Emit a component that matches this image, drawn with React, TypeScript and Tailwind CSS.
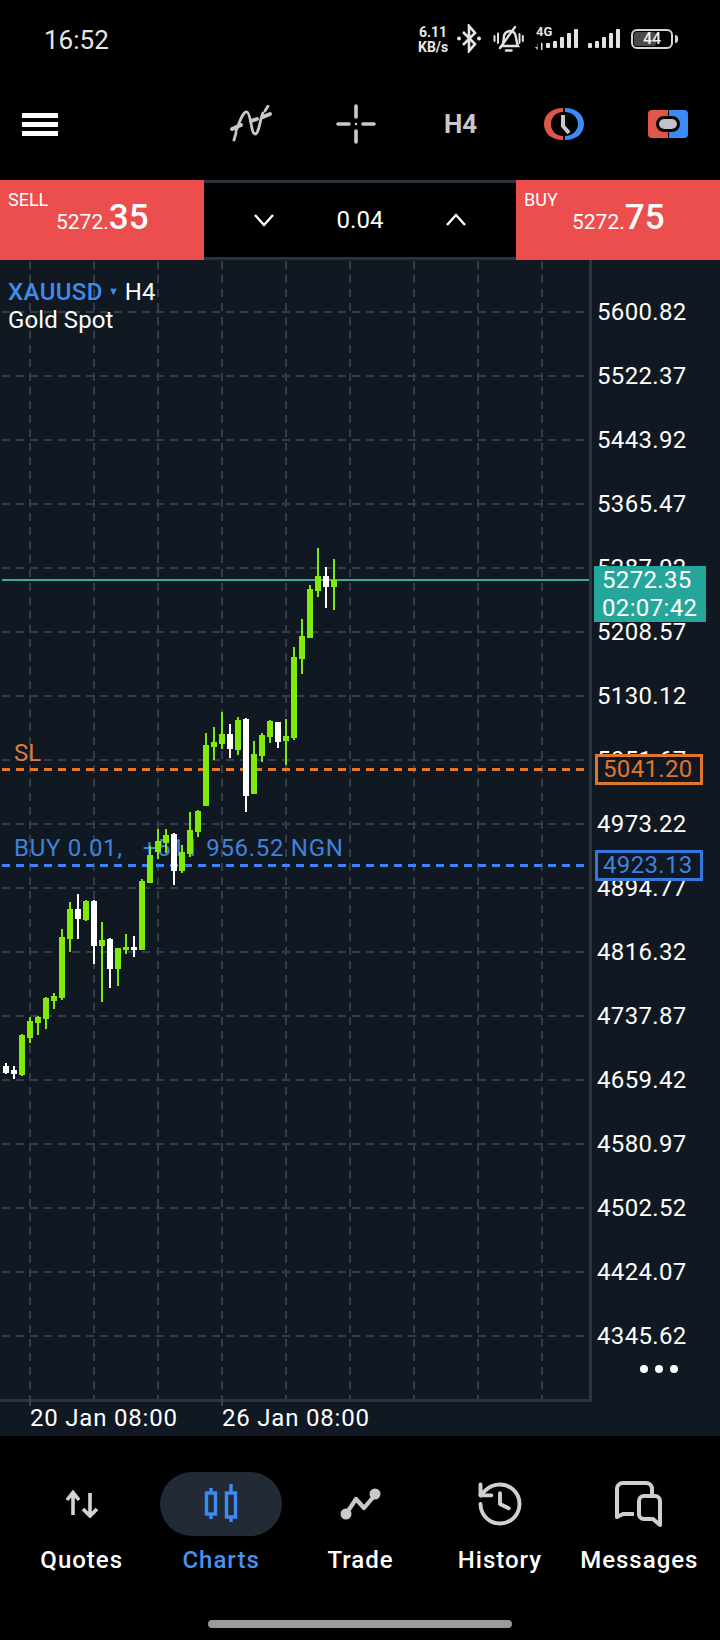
import { History } from "lucide-react";

// [x, wickTop, wickBottom, bodyTop, bodyBottom, white]
const candles: [number, number, number, number, number, boolean][] = [
  [6, 1063, 1074, 1066, 1073, true],
  [14, 1066, 1079, 1070, 1074, true],
  [22, 1034, 1076, 1035, 1075, false],
  [30, 1017, 1043, 1021, 1038, false],
  [38, 1016, 1035, 1017, 1023, false],
  [46, 997, 1029, 998, 1019, false],
  [54, 993, 1009, 996, 1001, false],
  [62, 929, 1000, 937, 998, false],
  [70, 902, 952, 909, 939, false],
  [78, 894, 939, 909, 919, true],
  [86, 900, 921, 901, 920, false],
  [94, 900, 964, 901, 946, true],
  [102, 922, 1002, 940, 946, false],
  [110, 938, 988, 939, 969, true],
  [118, 948, 986, 948, 969, false],
  [126, 934, 954, 947, 950, false],
  [134, 936, 957, 947, 950, true],
  [142, 879, 950, 881, 950, false],
  [150, 846, 883, 855, 883, false],
  [158, 829, 859, 841, 852, false],
  [166, 829, 853, 835, 843, false],
  [174, 833, 885, 834, 871, true],
  [182, 845, 873, 852, 871, false],
  [190, 812, 857, 830, 854, false],
  [198, 810, 837, 811, 832, false],
  [206, 733, 806, 745, 806, false],
  [214, 727, 760, 742, 747, false],
  [222, 712, 749, 734, 744, false],
  [230, 724, 758, 734, 749, true],
  [238, 717, 755, 720, 750, false],
  [246, 718, 812, 719, 796, true],
  [254, 741, 794, 754, 794, false],
  [262, 733, 762, 735, 756, false],
  [270, 720, 743, 721, 737, false],
  [278, 722, 748, 722, 742, true],
  [286, 719, 765, 736, 741, false],
  [294, 647, 740, 657, 738, false],
  [302, 619, 674, 636, 659, false],
  [310, 585, 638, 589, 638, false],
  [318, 548, 597, 576, 591, false],
  [326, 567, 608, 576, 587, true],
  [334, 559, 610, 580, 587, false],
];

const gridX = [30, 94, 158, 222, 286, 350, 414, 478, 542];
const gridY = [312, 376, 440, 504, 568, 632, 696, 760, 824, 888, 952, 1016, 1080, 1144, 1208, 1272, 1336];
const prices = [
  "5600.82", "5522.37", "5443.92", "5365.47", "5287.02", "5208.57", "5130.12", "5051.67", "4973.22",
  "4894.77", "4816.32", "4737.87", "4659.42", "4580.97", "4502.52", "4424.07", "4345.62",
];

function Bars() {
  return (
    <svg width="34" height="20" viewBox="0 0 34 20" fill="#e2e2e2">
      <rect x="0" y="14" width="4" height="5" rx="1" />
      <rect x="7" y="12" width="4" height="7" rx="1" />
      <rect x="14" y="8" width="4" height="11" rx="1" />
      <rect x="21" y="4" width="4" height="15" rx="1" />
      <rect x="28" y="0" width="4" height="19" rx="1" />
    </svg>
  );
}

function StatusBar() {
  return (
    <div className="h-[80px] flex items-start text-[#e6e6e6]">
      <div className="w-[418px] pl-[44px] pt-[24px] text-[26px] leading-[32px]">16:52</div>
      {/* network speed */}
      <div className="w-[30px] mt-[25px] text-[14px] leading-[15px] font-bold text-center">
        <div>6.11</div>
        <div>KB/s</div>
      </div>
      {/* bluetooth */}
      <svg className="ml-[9px] mt-[24px]" width="24" height="29" viewBox="0 0 24 29" fill="none" stroke="#e6e6e6" strokeWidth="2.6">
        <path d="M6 8 L18 20 L12 27 V2 L18 9 L6 21" />
        <circle cx="2" cy="14.5" r="2" fill="#e6e6e6" stroke="none" />
        <circle cx="22" cy="14.5" r="2" fill="#e6e6e6" stroke="none" />
      </svg>
      {/* muted bell */}
      <svg className="ml-[12px] mt-[25px]" width="31" height="28" viewBox="0 0 31 28" fill="none" stroke="#e2e2e2" strokeWidth="2.4" strokeLinecap="round">
        <path d="M9 21 C11 18 10.5 14 11 11 C12 6 19 4 22 9 C23.5 12 23 17 25 21 Z" />
        <path d="M13 25.5 H18.5" />
        <path d="M7 23 L22 2" stroke="#e2e2e2" />
        <path d="M1.5 11 V16 M5 8.5 V18 M26.5 9 V18 M29.8 11 V16" strokeWidth="2" />
      </svg>
      {/* 4G + sim 1 */}
      <div className="ml-[11px] mt-[27px] w-[45px] h-[22px] relative">
        <span className="absolute left-[1px] top-[-2px] text-[13px] leading-[14px] font-bold">4G</span>
        <svg className="absolute left-0 top-[15px]" width="10" height="8" viewBox="0 0 10 8" fill="#e2e2e2">
          <path d="M2.5 0 V8 L0 5 H2 Z M6 0 V8 H7.5 V2 L9.5 4 Z" />
        </svg>
        <div className="absolute left-[11px] top-[2px]">
          <Bars />
        </div>
      </div>
      {/* sim 2 */}
      <div className="ml-[8px] mt-[29px]">
        <Bars />
      </div>
      {/* battery */}
      <div className="ml-[9px] mt-[29px] flex items-center">
        <div className="relative w-[42px] h-[20px] rounded-[6px] border-2 border-[#d6d6d6] p-[1px]">
          <div className="h-full w-[60%] rounded-[3px] bg-[#4a4a4a]" />
          <span className="absolute inset-0 flex items-center justify-center text-[16px] font-medium leading-none text-[#eeeeee]">44</span>
        </div>
        <div className="ml-[2px] w-[3px] h-[8px] rounded-r bg-[#d6d6d6]" />
      </div>
    </div>
  );
}

function Toolbar() {
  return (
    <div className="h-[100px] pb-[12px] flex items-center">
      <div className="ml-[22px] w-[36px] flex flex-col gap-[4px]">
        <div className="h-[5px] bg-white" />
        <div className="h-[5px] bg-white" />
        <div className="h-[5px] bg-white" />
      </div>
      {/* indicators */}
      <svg className="ml-[172px]" width="42" height="38" viewBox="0 0 42 38" fill="none" stroke="#c9c9c9" strokeWidth="2.8" strokeLinecap="round">
        <path d="M6 26 C10 16 13 6 17 7 C21 8 21 29 25 29 C29 29 30 14 33 8" />
        <path d="M2 24 L11 20 M21 16 L27 14 M33 12 L40 9" strokeWidth="3.8" />
        <path d="M6 28 L4 35 M35 6 L38 1" />
      </svg>
      {/* crosshair */}
      <svg className="ml-[64px]" width="40" height="40" viewBox="0 0 40 40" stroke="#c9c9c9" strokeWidth="3.6" strokeLinecap="round">
        <path d="M2 20 H13 M27 20 H38 M20 2 V13 M20 27 V38" />
        <circle cx="20" cy="20" r="1.3" fill="#c9c9c9" stroke="none" />
      </svg>
      <div className="ml-[68px] w-[34px] text-[26px] leading-none font-bold text-[#c9c9c9]">H4</div>
      {/* time frame */}
      <svg className="ml-[66px]" width="40" height="34" viewBox="0 0 40 34" fill="none">
        <path d="M19 1 C7 1 0 8 0 17 C0 26 7 33 19 33 V29 C12 29 7 24 7 17 C7 10 12 5 19 5 Z" fill="#e0574a" />
        <path d="M21 1 C33 1 40 8 40 17 C40 26 33 33 21 33 V29 C28 29 34 24 34 17 C34 10 28 5 21 5 Z" fill="#3b8bf5" />
        <path d="M19 8 V19 L25 26" stroke="#c4c8cc" strokeWidth="4" />
      </svg>
      {/* one click trading */}
      <div className="ml-[64px] relative w-[40px] h-[28px] flex gap-[1px]">
        <div className="flex-1 rounded-l-[4px] bg-[#e0574a]" />
        <div className="flex-1 rounded-r-[4px] bg-[#3b8bf5]" />
        <div className="absolute left-[11px] top-[9px] w-[18px] h-[10px] rounded-[5px] bg-[#c0c4c8] outline-[3px] outline-solid outline-black" />
      </div>
    </div>
  );
}

function PriceButton({ label, frac }: { label: string; frac: string }) {
  return (
    <div className="w-[204px] h-full bg-[#ec4d4d] text-white relative">
      <div className="pl-[8px] pt-[9px] text-[18px] leading-[22px]">{label}</div>
      <div className="absolute left-[56px] top-[16px] flex items-baseline">
        <span className="text-[21px] leading-none">5272.</span>
        <span className="text-[35px] leading-[44px] font-medium">{frac}</span>
      </div>
    </div>
  );
}

function TradeBar() {
  return (
    <div className="h-[80px] flex">
      <PriceButton label="SELL" frac="35" />
      <div className="flex-1 flex items-center border-y-[3px] border-[#2a323d] text-white">
        <svg className="ml-[50px]" width="20" height="14" viewBox="0 0 20 14" fill="none" stroke="white" strokeWidth="2.4">
          <path d="M1 2 L10 12 L19 2" />
        </svg>
        <div className="w-[172px] text-center text-[24px] leading-none">0.04</div>
        <svg width="20" height="14" viewBox="0 0 20 14" fill="none" stroke="white" strokeWidth="2.4">
          <path d="M1 12 L10 2 L19 12" />
        </svg>
      </div>
      <PriceButton label="BUY" frac="75" />
    </div>
  );
}

function Plot() {
  return (
    <div className="relative w-[592px] h-[1142px] border-r-[3px] border-b-[3px] border-[#2c3542]">
      {/* grid */}
      <svg className="absolute left-0 top-0 overflow-visible" width="589" height="1139" viewBox="0 260 589 1139" fill="none">
        <g stroke="#333c47" strokeWidth="2" strokeDasharray="8 6">
          {gridX.map((x) => (
            <path key={x} d={`M${x} 261 V1399`} />
          ))}
          {gridY.map((y) => (
            <path key={y} d={`M2 ${y} H589`} />
          ))}
        </g>
        <path d="M30 1399 V1406 M222 1399 V1406" stroke="#3a4452" strokeWidth="2" />
      </svg>

      {/* labels sit under the candles */}
      <div className="absolute left-[8px] top-[18px] text-[24px] leading-[28px] text-white">
        <div className="flex items-center">
          <span className="font-medium tracking-[0.4px] text-[#3f8cf0]">XAUUSD</span>
          <span className="ml-[5px] text-[11px] text-[#3f8cf0]">▼</span>
          <span className="ml-[6px]">H4</span>
        </div>
        <div className="tracking-[0.1px]">Gold Spot</div>
      </div>
      <span className="absolute left-[14px] top-[478px] text-[24px] leading-[30px] text-[#dd7b45]">SL</span>
      <span className="absolute left-[14px] top-[573px] text-[24px] leading-[30px] tracking-[0.7px] whitespace-pre text-[#3f82dc]">BUY 0.01,   +511 956.52 NGN</span>

      {/* price lines and candles */}
      <svg className="absolute left-0 top-0" width="589" height="1139" viewBox="0 260 589 1139" fill="none">
        <path d="M2 580 H589" stroke="#3fa79b" strokeWidth="2" />
        <path d="M2 769.5 H586" stroke="#e8752a" strokeWidth="3" strokeDasharray="8 6" />
        <path d="M2 865.5 H586" stroke="#3b82f6" strokeWidth="3" strokeDasharray="8 6" />
        {candles.map(([x, wt, wb, bt, bb, white]) => {
          const color = white ? "#ffffff" : "#7fea0c";
          return (
            <g key={x} fill={color}>
              <rect x={x - 1} y={wt} width="2" height={wb - wt} />
              <rect x={x - 3} y={bt} width="6" height={bb - bt} />
            </g>
          );
        })}
      </svg>
    </div>
  );
}

function PriceAxis() {
  return (
    <div className="relative flex-1 pt-[20px] pl-[5px] text-[24px] tracking-[0.35px] text-white">
      {prices.map((p) => (
        <div key={p} className="h-16 flex items-center">
          {p}
        </div>
      ))}
      {/* live price tag */}
      <div className="absolute left-[2px] top-[306px] w-[112px] h-[56px] bg-[#26a69a] pl-[8px] text-[24px] leading-[28px]">
        <div>5272.35</div>
        <div>02:07:42</div>
      </div>
      <div className="absolute left-[3px] top-[494px] w-[108px] h-[31px] border-[3px] border-[#e0752e] bg-[#101822] pl-[5px] text-[24px] leading-[25px] text-[#e0752e]">5041.20</div>
      <div className="absolute left-[3px] top-[590px] w-[108px] h-[31px] border-[3px] border-[#3577e0] bg-[#101822] pl-[5px] text-[24px] leading-[25px] text-[#3f82dc]">4923.13</div>
      <div className="absolute left-[48px] top-[1105px] flex gap-[7px]">
        <div className="w-[8px] h-[8px] rounded-full bg-white" />
        <div className="w-[8px] h-[8px] rounded-full bg-white" />
        <div className="w-[8px] h-[8px] rounded-full bg-white" />
      </div>
    </div>
  );
}

function NavItem({ label, icon, active }: { label: string; icon: React.ReactNode; active?: boolean }) {
  return (
    <div className="flex flex-col items-center">
      <div className={`h-[64px] flex items-center justify-center ${active ? "w-[122px] rounded-full bg-[#222b35]" : "w-full"}`}>
        {icon}
      </div>
      <div className={`mt-[8px] text-[24px] leading-[32px] font-medium tracking-[1px] whitespace-nowrap ${active ? "text-[#4a90ee]" : "text-white"}`}>
        {label}
      </div>
    </div>
  );
}

function BottomNav() {
  return (
    <div className="flex-1 bg-black relative pt-[36px] pl-[12px] pr-[11px]">
      <div className="grid grid-cols-5">
        <NavItem
          label="Quotes"
          icon={
            <svg width="34" height="28" viewBox="0 0 34 28" fill="none" stroke="#d4d4d4" strokeWidth="3.6">
              <path d="M8 25 V3 M2 10 L8 2.5 L14 10" />
              <path d="M25 3 V26 M18 19 L25 26 L32 19" />
            </svg>
          }
        />
        <NavItem
          label="Charts"
          active
          icon={
            <svg width="34" height="40" viewBox="0 0 34 40" fill="none" stroke="#3b8bf5" strokeWidth="3.4">
              <path d="M7 4 V35 M27 0 V38" />
              <rect x="2.5" y="9" width="9" height="21" fill="#222b35" />
              <rect x="22.5" y="9" width="9" height="24" fill="#222b35" />
            </svg>
          }
        />
        <NavItem
          label="Trade"
          icon={
            <svg width="42" height="34" viewBox="0 0 42 34" fill="none" stroke="#c9c9c9" strokeWidth="4.2" strokeLinejoin="round">
              <path d="M7 27 L17 12 L25 21 L36 8" />
              <circle cx="7" cy="27" r="5.5" fill="#c9c9c9" stroke="none" />
              <circle cx="36" cy="7" r="5.5" fill="#c9c9c9" stroke="none" />
            </svg>
          }
        />
        <NavItem label="History" icon={<History size={52} strokeWidth={1.8} color="#d0d0d0" />} />
        <NavItem
          label="Messages"
          icon={
            <svg width="50" height="48" viewBox="0 0 50 48" fill="none" stroke="#cfcfcf" strokeWidth="4" strokeLinejoin="round">
              <path d="M20 34 H9 L3 37 V9 a6 6 0 0 1 6-6 H32 a6 6 0 0 1 6 6 V15" />
              <path d="M30 16 H41 a5 5 0 0 1 5 5 V45 L39 39 H30 a5 5 0 0 1-5-5 V21 a5 5 0 0 1 5-5 Z" />
            </svg>
          }
        />
      </div>
      {/* home indicator */}
      <div className="absolute left-[208px] bottom-[12px] w-[304px] h-[8px] rounded-full bg-[#9b9b9b]" />
    </div>
  );
}

export default function App() {
  return (
    <div className="w-[720px] h-[1640px] bg-black flex flex-col overflow-hidden [font-family:Roboto,sans-serif]">
      <StatusBar />
      <Toolbar />
      <TradeBar />

      {/* chart */}
      <div className="h-[1176px] bg-[#101822]">
        <div className="flex">
          <Plot />
          <PriceAxis />
        </div>
        <div className="flex pl-[30px] text-[24px] leading-[32px] tracking-[0.8px] text-white">
          <div className="w-[192px]">20 Jan 08:00</div>
          <div>26 Jan 08:00</div>
        </div>
      </div>

      <BottomNav />
    </div>
  );
}
